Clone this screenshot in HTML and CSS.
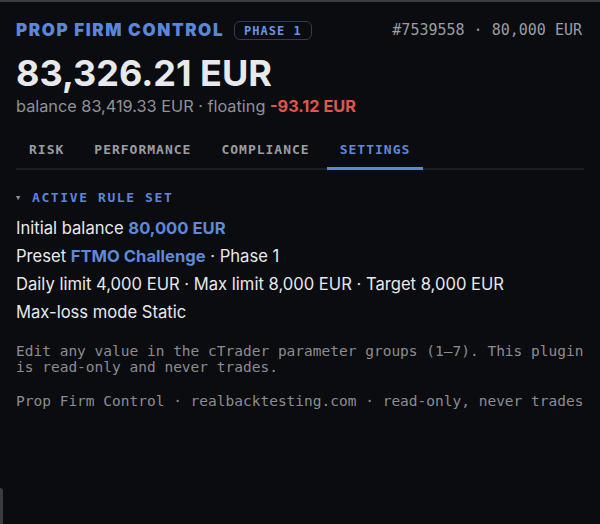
FILE: index.html
```html
<!DOCTYPE html>
<html>
<head>
<meta charset="UTF-8">
<meta name="viewport" content="width=device-width, initial-scale=1">
<title>Prop Firm Control</title>
<link rel="stylesheet" href="styles.css">
</head>
<body>

<div class="panel">

  <div class="head">
    <div class="brand">
      <span class="title">PROP FIRM CONTROL</span>
      <span class="badge">PHASE 1</span>
    </div>
    <div class="account">#7539558 · 80,000 EUR</div>
  </div>

  <div class="equity">83,326.21 EUR</div>
  <div class="sub">balance 83,419.33 EUR · floating <b class="neg">-93.12 EUR</b></div>

  <div class="tabs">
    <span class="tab">RISK</span>
    <span class="tab">PERFORMANCE</span>
    <span class="tab">COMPLIANCE</span>
    <span class="tab active">SETTINGS</span>
  </div>

  <div class="section">
    <div class="section-title"><span class="caret">▼</span>ACTIVE RULE SET</div>
    <div class="row">Initial balance <b class="hl">80,000 EUR</b></div>
    <div class="row">Preset <b class="hl">FTMO Challenge</b> · Phase 1</div>
    <div class="row">Daily limit 4,000 EUR · Max limit 8,000 EUR · Target 8,000 EUR</div>
    <div class="row">Max-loss mode Static</div>
  </div>

  <p class="note">Edit any value in the cTrader parameter groups (1–7). This plugin is read-only and never trades.</p>

  <div class="footer">Prop Firm Control · realbacktesting.com · read-only, never trades</div>

</div>

<div class="edge"></div>

</body>
</html>
```

FILE: styles.css
```css
html, body {
  height: 100%;
}

body {
  margin: 0;
  background-color: #0b0c0f;
  border-top: 2px solid #3b3c3f;
  box-sizing: border-box;
  color: #e8e9ec;
  font-family: Inter, "Noto Sans", sans-serif;
}

.panel {
  padding: 17px 16px 0 16px;
}

.account, .badge, .tabs, .section-title, .note, .footer {
  font-family: "DejaVu Sans Mono", "Liberation Mono", monospace;
}

/* header */
.head {
  display: flex;
  justify-content: space-between;
  align-items: center;
  height: 22px;
}

.brand {
  display: flex;
  align-items: center;
  gap: 10px;
}

.title {
  color: #5b86da;
  font-size: 17px;
  font-weight: 900;
  letter-spacing: 1.6px;
}

.badge {
  color: #6c93e0;
  font-size: 12px;
  font-weight: bold;
  letter-spacing: 1px;
  border: 1px solid #2c3d5e;
  border-radius: 6px;
  padding: 2px 9px 1px 9px;
  line-height: 14px;
}

.account {
  color: #9a9da3;
  font-size: 15px;
  margin-right: 2px;
}

.equity {
  font-size: 36px;
  font-weight: 700;
  line-height: 40px;
  margin-top: 12px;
}

.sub {
  color: #8f9299;
  font-size: 16.3px;
  line-height: 20px;
  margin-top: 3px;
}

.neg {
  color: #e0554e;
  font-weight: 700;
}

/* tabs */
.tabs {
  display: flex;
  gap: 4px;
  border-bottom: 2px solid #1c1e23;
  margin-top: 19px;
}

.tab {
  color: #9a9da3;
  font-size: 13px;
  font-weight: bold;
  letter-spacing: 1px;
  padding: 7px 13px 10px 13px;
  border-bottom: 3px solid transparent;
  margin-bottom: -2px;
}

.tab.active {
  color: #6088d8;
  border-bottom-color: #5b86da;
}

/* rule set */
.section {
  margin-top: 20px;
}

.section-title {
  color: #5b86da;
  font-size: 13px;
  font-weight: bold;
  letter-spacing: 1.6px;
  margin-bottom: 9px;
}

.caret {
  display: inline-block;
  color: #8f9299;
  font-size: 7px;
  letter-spacing: 0;
  width: 16px;
  vertical-align: 2px;
}

.row {
  font-size: 16.6px;
  line-height: 28px;
}

.hl {
  color: #6088d8;
  font-weight: 700;
}

.note {
  color: #8a8d93;
  font-size: 14.5px;
  line-height: 16px;
  margin: 17px 0 0 0;
}

.footer {
  color: #8a8d93;
  font-size: 14.5px;
  margin-top: 18px;
}

.edge {
  position: fixed;
  left: 0;
  bottom: 0;
  width: 3px;
  height: 36px;
  background-color: #3a3b3e;
  border-top-right-radius: 3px;
}
```
